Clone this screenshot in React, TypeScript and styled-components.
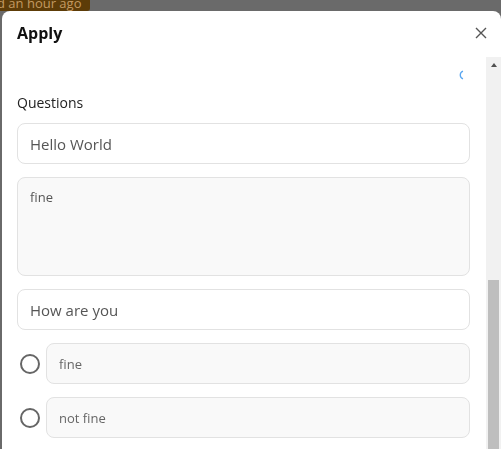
import React, { useLayoutEffect, useRef, useState } from "react";
import styled, { createGlobalStyle } from "styled-components";

const GlobalStyle = createGlobalStyle`
  html, body {
    margin: 0;
    padding: 0;
    overflow: hidden;
    height: 100%;
  }
  body {
    font-family: "Open Sans", "Liberation Sans", sans-serif;
    background: #6a6a6a;
  }
  * {
    box-sizing: border-box;
  }
`;

const Page = styled.div`
  height: 449px;
  background: #6a6a6a;
`;

const TimeBadge = styled.div`
  width: 90px;
  height: 11px;
  overflow: hidden;
  background: #5d3c08;
  border-radius: 0 0 3px 0;
`;

const BadgeText = styled.span`
  display: block;
  margin-top: -5px;
  margin-left: -3px;
  white-space: nowrap;
  font-size: 13px;
  line-height: 16px;
  color: #c39a62;
`;

const Modal = styled.div`
  position: fixed;
  top: 11px;
  left: 2px;
  width: 499px;
  height: 486px;
  display: flex;
  flex-direction: column;
  background: #fff;
  border-radius: 8px;
  overflow: hidden;
`;

const Header = styled.div`
  height: 46px;
  flex-shrink: 0;
  display: flex;
  align-items: center;
  justify-content: space-between;
  padding: 0 14px 2px 15px;
`;

const Title = styled.h2`
  margin: 0;
  font-size: 16px;
  font-weight: 700;
  color: #111;
`;

const CloseButton = styled.button`
  border: 0;
  background: none;
  padding: 0;
  width: 12px;
  height: 12px;
  display: flex;
  cursor: pointer;
`;

const Body = styled.div`
  height: 440px;
  display: flex;
`;

const Scroller = styled.div`
  flex: 1;
  min-width: 0;
  overflow: hidden;
  padding: 0 16px 0 15px;
`;

const ScrollTrack = styled.div`
  width: 15px;
  flex-shrink: 0;
  display: flex;
  flex-direction: column;
  background: #f1f1f1;
`;

const ArrowButton = styled.div<{ $down?: boolean }>`
  height: 15px;
  flex-shrink: 0;
  display: flex;
  align-items: center;
  justify-content: center;

  &::before {
    content: "";
    border-left: 3.5px solid transparent;
    border-right: 3.5px solid transparent;
    ${({ $down }) =>
      $down ? "border-top: 4px solid #505050;" : "border-bottom: 4px solid #505050;"}
  }
`;

const Rail = styled.div`
  flex: 1;
  display: flex;
  flex-direction: column;
  padding: 0 2px;
`;

const Thumb = styled.div`
  flex-shrink: 0;
  background: #bebebe;
`;

const Details = styled.div`
  height: 453px;
  padding-top: 10px;
  font-size: 13px;
  line-height: 20px;
  color: #444;
`;

const Section = styled.div`
  height: 440px;
  display: flex;
  flex-direction: column;
`;

const LoaderRow = styled.div`
  height: 36px;
  display: flex;
  align-items: center;
  justify-content: flex-end;
  padding-right: 1px;
`;

const Label = styled.div`
  height: 20px;
  line-height: 20px;
  font-size: 14px;
  color: #222;
  margin-bottom: 10px;
`;

const Fields = styled.div`
  display: flex;
  flex-direction: column;
  gap: 13px;
`;

const QuestionInput = styled.input`
  height: 41px;
  width: 100%;
  padding: 0 12px;
  border: 1px solid #e2e2e2;
  border-radius: 8px;
  background: #fff;
  font-family: inherit;
  font-size: 15px;
  font-weight: 500;
  color: #555;
  outline: none;
`;

const Answer = styled.textarea`
  height: 99px;
  width: 100%;
  padding: 10px 12px;
  border: 1px solid #e2e2e2;
  border-radius: 8px;
  background: #f9f9f9;
  font-family: inherit;
  font-size: 13px;
  color: #555;
  caret-color: #222;
  resize: none;
  outline: none;
`;

const OptionRow = styled.label`
  display: flex;
  align-items: center;
  gap: 6px;
`;

const Radio = styled.span`
  width: 20px;
  height: 20px;
  margin-left: 3px;
  flex-shrink: 0;
  border: 2px solid #666;
  border-radius: 50%;
`;

const OptionInput = styled.input`
  flex: 1;
  min-width: 0;
  height: 41px;
  padding: 0 12px;
  border: 1px solid #e2e2e2;
  border-radius: 8px;
  background: #f9f9f9;
  font-family: inherit;
  font-size: 13px;
  color: #666;
  outline: none;
`;

const Spinner = () => (
  <svg width="10" height="10" viewBox="0 0 10 10">
    <path d="M4 1.2 A4 4 0 0 0 4 8.8" fill="none" stroke="#5aa6f0" strokeWidth="1.3" />
  </svg>
);

const CloseIcon = () => (
  <svg width="12" height="12" viewBox="0 0 12 12">
    <path d="M1 1 L11 11 M11 1 L1 11" stroke="#555" strokeWidth="1.4" />
  </svg>
);

const options = ["fine", "not fine"];

export default function App() {
  const bodyRef = useRef<HTMLDivElement>(null);
  const answerRef = useRef<HTMLTextAreaElement>(null);
  const [thumb, setThumb] = useState({ top: 0, height: 0 });

  useLayoutEffect(() => {
    const ta = answerRef.current;
    if (ta) {
      ta.focus({ preventScroll: true });
      ta.setSelectionRange(4, 4);
    }
    const el = bodyRef.current;
    if (el) {
      el.scrollTop = el.scrollHeight;
      const railLen = el.clientHeight - 30;
      setThumb({
        top: (railLen * el.scrollTop) / el.scrollHeight,
        height: (railLen * el.clientHeight) / el.scrollHeight,
      });
    }
  }, []);

  return (
    <Page>
      <GlobalStyle />
      <TimeBadge>
        <BadgeText>d an hour ago</BadgeText>
      </TimeBadge>
      <Modal>
        <Header>
          <Title>Apply</Title>
          <CloseButton aria-label="Close">
            <CloseIcon />
          </CloseButton>
        </Header>
        <Body>
          <Scroller ref={bodyRef}>
            <Details>
              We are looking for a motivated person to join our team. Please answer the
              questions below so we can learn a little more about you before the interview.
            </Details>
            <Section>
              <LoaderRow>
                <Spinner />
              </LoaderRow>
              <Label>Questions</Label>
              <Fields>
                <QuestionInput readOnly value="Hello World" />
                <Answer ref={answerRef} defaultValue="fine" />
                <QuestionInput readOnly value="How are you" />
                {options.map((opt) => (
                  <OptionRow key={opt}>
                    <Radio />
                    <OptionInput readOnly value={opt} />
                  </OptionRow>
                ))}
              </Fields>
            </Section>
          </Scroller>
          <ScrollTrack>
            <ArrowButton />
            <Rail>
              <div style={{ height: thumb.top, flexShrink: 0 }} />
              <Thumb style={{ height: thumb.height }} />
            </Rail>
            <ArrowButton $down />
          </ScrollTrack>
        </Body>
      </Modal>
    </Page>
  );
}
